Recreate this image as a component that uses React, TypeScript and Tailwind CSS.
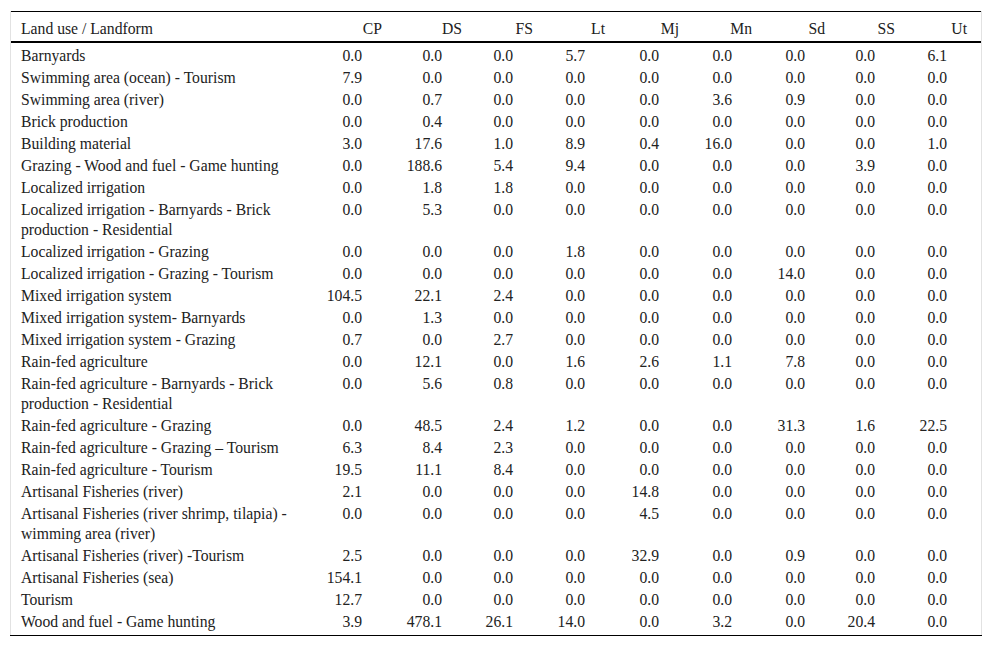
const cols = ['CP', 'DS', 'FS', 'Lt', 'Mj', 'Mn', 'Sd', 'SS', 'Ut'];

const rows: [string, string[]][] = [
  ['Barnyards', ['0.0', '0.0', '0.0', '5.7', '0.0', '0.0', '0.0', '0.0', '6.1']],
  ['Swimming area (ocean) - Tourism', ['7.9', '0.0', '0.0', '0.0', '0.0', '0.0', '0.0', '0.0', '0.0']],
  ['Swimming area (river)', ['0.0', '0.7', '0.0', '0.0', '0.0', '3.6', '0.9', '0.0', '0.0']],
  ['Brick production', ['0.0', '0.4', '0.0', '0.0', '0.0', '0.0', '0.0', '0.0', '0.0']],
  ['Building material', ['3.0', '17.6', '1.0', '8.9', '0.4', '16.0', '0.0', '0.0', '1.0']],
  ['Grazing - Wood and fuel - Game hunting', ['0.0', '188.6', '5.4', '9.4', '0.0', '0.0', '0.0', '3.9', '0.0']],
  ['Localized irrigation', ['0.0', '1.8', '1.8', '0.0', '0.0', '0.0', '0.0', '0.0', '0.0']],
  ['Localized irrigation - Barnyards - Brick production - Residential', ['0.0', '5.3', '0.0', '0.0', '0.0', '0.0', '0.0', '0.0', '0.0']],
  ['Localized irrigation - Grazing', ['0.0', '0.0', '0.0', '1.8', '0.0', '0.0', '0.0', '0.0', '0.0']],
  ['Localized irrigation - Grazing - Tourism', ['0.0', '0.0', '0.0', '0.0', '0.0', '0.0', '14.0', '0.0', '0.0']],
  ['Mixed irrigation system', ['104.5', '22.1', '2.4', '0.0', '0.0', '0.0', '0.0', '0.0', '0.0']],
  ['Mixed irrigation system- Barnyards', ['0.0', '1.3', '0.0', '0.0', '0.0', '0.0', '0.0', '0.0', '0.0']],
  ['Mixed irrigation system - Grazing', ['0.7', '0.0', '2.7', '0.0', '0.0', '0.0', '0.0', '0.0', '0.0']],
  ['Rain-fed agriculture', ['0.0', '12.1', '0.0', '1.6', '2.6', '1.1', '7.8', '0.0', '0.0']],
  ['Rain-fed agriculture - Barnyards - Brick production - Residential', ['0.0', '5.6', '0.8', '0.0', '0.0', '0.0', '0.0', '0.0', '0.0']],
  ['Rain-fed agriculture - Grazing', ['0.0', '48.5', '2.4', '1.2', '0.0', '0.0', '31.3', '1.6', '22.5']],
  ['Rain-fed agriculture - Grazing \u2013 Tourism', ['6.3', '8.4', '2.3', '0.0', '0.0', '0.0', '0.0', '0.0', '0.0']],
  ['Rain-fed agriculture - Tourism', ['19.5', '11.1', '8.4', '0.0', '0.0', '0.0', '0.0', '0.0', '0.0']],
  ['Artisanal Fisheries (river)', ['2.1', '0.0', '0.0', '0.0', '14.8', '0.0', '0.0', '0.0', '0.0']],
  ['Artisanal Fisheries (river shrimp, tilapia) - wimming area (river)', ['0.0', '0.0', '0.0', '0.0', '4.5', '0.0', '0.0', '0.0', '0.0']],
  ['Artisanal Fisheries (river) -Tourism', ['2.5', '0.0', '0.0', '0.0', '32.9', '0.0', '0.9', '0.0', '0.0']],
  ['Artisanal Fisheries (sea)', ['154.1', '0.0', '0.0', '0.0', '0.0', '0.0', '0.0', '0.0', '0.0']],
  ['Tourism', ['12.7', '0.0', '0.0', '0.0', '0.0', '0.0', '0.0', '0.0', '0.0']],
  ['Wood and fuel - Game hunting', ['3.9', '478.1', '26.1', '14.0', '0.0', '3.2', '0.0', '20.4', '0.0']],
];

export default function App() {
  return (
    <div className="min-h-screen bg-white pt-[11px] pl-[10px] [font-family:'Liberation_Serif',serif] text-[15.7px] text-[#222]">
      <div className="w-[972px] border-x border-[#e2e2e2]">
        <table className="w-full table-fixed border-collapse border-t border-black">
          <colgroup>
            <col className="w-[300px]" />
            <col className="w-[85px]" />
            <col className="w-[80px]" />
            <col className="w-[71px]" />
            <col className="w-[72px]" />
            <col className="w-[74px]" />
            <col className="w-[73px]" />
            <col className="w-[73px]" />
            <col className="w-[70px]" />
            <col className="w-[72px]" />
          </colgroup>
          <thead>
            <tr className="border-b-2 border-black">
              <th className="h-[30px] pl-[10px] pt-[7px] text-left align-top font-normal leading-[20px]">Land use / Landform</th>
              {cols.map((c) => (
                <th key={c} className="h-[30px] pt-[7px] pr-[14px] text-right align-top font-normal leading-[20px]">
                  {c}
                </th>
              ))}
            </tr>
          </thead>
          <tbody>
            {rows.map(([name, vals], i) => {
              // first row sits 1px lower under the thick rule
              const pad = i === 0 ? 'pt-[3px]' : 'pt-[2px]';
              return (
                <tr key={i}>
                  <td className={`${pad} pb-0 pl-[10px] align-top leading-[20px]`}>{name}</td>
                  {vals.map((v, j) => (
                    <td key={j} className={`${pad} pb-0 pr-[34px] text-right align-top leading-[20px]`}>
                      {v}
                    </td>
                  ))}
                </tr>
              );
            })}
          </tbody>
        </table>
        <div className="h-[3px]" />
      </div>
      <div className="h-px w-[972px] bg-black" />
    </div>
  );
}
